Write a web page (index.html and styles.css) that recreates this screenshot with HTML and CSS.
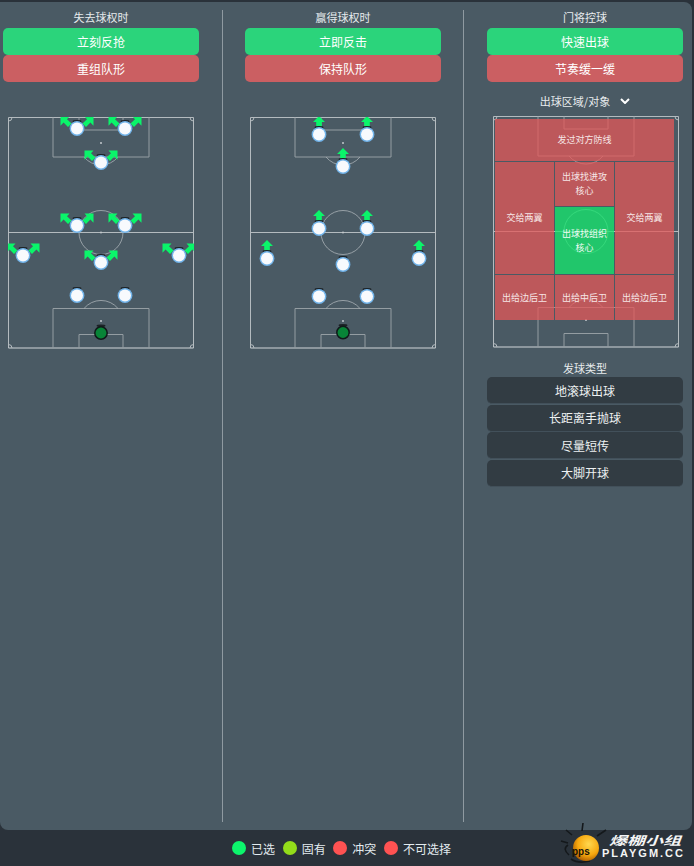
FILE: index.html
```html
<!DOCTYPE html>
<html lang="zh-CN">
<head>
    <meta charset="UTF-8">
    <meta name="viewport" content="width=device-width, initial-scale=1.0">
    <title>球队战术</title>
    <link rel="stylesheet" href="styles.css">
</head>
<body>
    <svg class="defs" aria-hidden="true">
        <defs>
            <g id="field">
                <path class="line-soft" d="M0.5 231V0.5H185.5V231"/>
                <path class="line" d="M0.5 231H185.5"/>
                <path class="line-soft" d="M0.5 115.5H185.5"/>
                <circle class="thin" cx="93" cy="115.5" r="22"/>
                <path class="line-soft" d="M0.5 4A3.5 3.5 0 0 0 4 0.5M182 0.5A3.5 3.5 0 0 0 185.5 4M0.5 227.5A3.5 3.5 0 0 1 4 231M182 231A3.5 3.5 0 0 1 185.5 227.5"/>
                <path class="box" d="M45 0.5V40H141V0.5M71 0.5V13H115V0.5"/>
                <path class="box" d="M45 231V191.5H141V231M71 231V217.5H115V231"/>
                <path class="thin" d="M76 40A22 22 0 0 0 110 40M76 191.5A22 22 0 0 1 110 191.5"/>
                <circle class="spot" cx="93" cy="26" r="1"/>
                <circle class="spot" cx="93" cy="115.5" r="1"/>
                <circle class="spot" cx="93" cy="204" r="1"/>
            </g>
            <g id="player">
                <ellipse class="nub" cx="0" cy="-7.2" rx="4.5" ry="1.4"/>
                <circle class="halo" r="7.4"/>
                <circle class="disc" r="6"/>
            </g>
            <g id="keeper">
                <ellipse class="nub" cx="0" cy="-7.2" rx="4.5" ry="1.4"/>
                <circle class="disc-gk" r="6.2"/>
            </g>
            <g id="press">
                <path class="arrow" d="M-16.5 -12H-7.5L-10 -9.2L-5.5 -5L-9 -1.5L-13.4 -5.9L-16.5 -2.8Z"/>
                <path class="arrow" d="M16.5 -12H7.5L10 -9.2L5.5 -5L9 -1.5L13.4 -5.9L16.5 -2.8Z"/>
            </g>
            <g id="up">
                <path class="arrow" d="M0 -18.5L6 -12.5H2.8V-6.5H-2.8V-12.5H-6Z"/>
            </g>
        </defs>
    </svg>

    <div class="panel">
        <section class="col">
            <div class="col-title">失去球权时</div>
            <button class="btn btn-green">立刻反抢</button>
            <button class="btn btn-red">重组队形</button>
            <div class="spacer"></div>
            <svg class="pitch" viewBox="0 0 186 232">
                <use href="#field"/>
                <use href="#press" x="69" y="11.5"/><use href="#player" x="69" y="11.5"/>
                <use href="#press" x="117" y="11.5"/><use href="#player" x="117" y="11.5"/>
                <use href="#press" x="93" y="45.5"/><use href="#player" x="93" y="45.5"/>
                <use href="#press" x="69" y="108.5"/><use href="#player" x="69" y="108.5"/>
                <use href="#press" x="117" y="108.5"/><use href="#player" x="117" y="108.5"/>
                <use href="#press" x="15" y="138.5"/><use href="#player" x="15" y="138.5"/>
                <use href="#press" x="171" y="138.5"/><use href="#player" x="171" y="138.5"/>
                <use href="#press" x="93" y="145.5"/><use href="#player" x="93" y="145.5"/>
                <use href="#player" x="69" y="178.5"/>
                <use href="#player" x="117" y="178.5"/>
                <use href="#keeper" x="93" y="216"/>
            </svg>
        </section>

        <div class="divider"></div>

        <section class="col">
            <div class="col-title">赢得球权时</div>
            <button class="btn btn-green">立即反击</button>
            <button class="btn btn-red">保持队形</button>
            <div class="spacer"></div>
            <svg class="pitch" viewBox="0 0 186 232">
                <use href="#field"/>
                <use href="#up" x="69" y="17.5"/><use href="#player" x="69" y="17.5"/>
                <use href="#up" x="117" y="17.5"/><use href="#player" x="117" y="17.5"/>
                <use href="#up" x="93" y="49.5"/><use href="#player" x="93" y="49.5"/>
                <use href="#up" x="69" y="111.5"/><use href="#player" x="69" y="111.5"/>
                <use href="#up" x="117" y="111.5"/><use href="#player" x="117" y="111.5"/>
                <use href="#up" x="17" y="141.5"/><use href="#player" x="17" y="141.5"/>
                <use href="#up" x="169" y="141.5"/><use href="#player" x="169" y="141.5"/>
                <use href="#player" x="93" y="147.5"/>
                <use href="#player" x="69" y="179.5"/>
                <use href="#player" x="117" y="179.5"/>
                <use href="#keeper" x="93" y="215.5"/>
            </svg>
        </section>

        <div class="divider divider-second"></div>

        <section class="col">
            <div class="col-title">门将控球</div>
            <button class="btn btn-green">快速出球</button>
            <button class="btn btn-red">节奏缓一缓</button>
            <div class="dropdown">
                <span>出球区域/对象</span>
                <svg class="chevron" viewBox="0 0 10 6"><path d="M1 1L5 5L9 1"/></svg>
            </div>
            <div class="zone-pitch">
                <svg class="pitch" viewBox="0 0 186 232"><use href="#field"/></svg>
                <div class="zones">
                    <div class="zone zone-top">发过对方防线</div>
                    <div class="zone zone-wing">交给两翼</div>
                    <div class="zone">出球找进攻核心</div>
                    <div class="zone zone-wing">交给两翼</div>
                    <div class="zone zone-on">出球找组织核心</div>
                    <div class="zone">出给边后卫</div>
                    <div class="zone">出给中后卫</div>
                    <div class="zone">出给边后卫</div>
                </div>
            </div>
            <div class="col-title sub-title">发球类型</div>
            <div class="btn-stack">
                <button class="btn btn-dark">地滚球出球</button>
                <button class="btn btn-dark">长距离手抛球</button>
                <button class="btn btn-dark">尽量短传</button>
                <button class="btn btn-dark">大脚开球</button>
            </div>
        </section>
    </div>

    <footer class="footer">
        <div class="legend-item"><span class="dot dot-selected"></span>已选</div>
        <div class="legend-item"><span class="dot dot-fixed"></span>固有</div>
        <div class="legend-item"><span class="dot dot-red"></span>冲突</div>
        <div class="legend-item"><span class="dot dot-red"></span>不可选择</div>
    </footer>

    <div class="logo">
        <svg class="logo-ball" viewBox="0 0 50 44">
            <defs>
                <radialGradient id="ballFill" cx="0.6" cy="0.35" r="0.7">
                    <stop offset="0" stop-color="#ffd84f"/>
                    <stop offset="0.6" stop-color="#f7a80f"/>
                    <stop offset="1" stop-color="#a85a00"/>
                </radialGradient>
            </defs>
            <path class="ray" d="M22 9L23 1M12 13L6 8M8 21L1 19M37 14L46 8M9 33Q2 27 8 23M11 37Q18 42 30 39"/>
            <circle cx="26" cy="26" r="13" fill="url(#ballFill)"/>
            <text class="ball-text" x="12" y="33">pps</text>
        </svg>
        <div class="logo-text">
            <div class="logo-cn">爆棚小组</div>
            <div class="logo-en">PLAYGM.CC</div>
        </div>
    </div>
</body>
</html>
```

FILE: styles.css
```css
* {
    box-sizing: border-box;
}
html, body {
    margin: 0;
    height: 100%;
}
body {
    position: relative;
    width: 694px;
    height: 866px;
    overflow: hidden;
    display: flex;
    flex-direction: column;
    background-color: #2a323a;
    color: #e8ecee;
    font-family: "Noto Sans CJK SC", "Noto Sans", sans-serif;
}
.defs {
    position: absolute;
    width: 0;
    height: 0;
}

/* main panel */
.panel {
    display: flex;
    width: 692px;
    height: 828px;
    margin-top: 2px;
    padding-left: 3px;
    background-color: #4a5a64;
    border-radius: 0 8px 8px 8px;
}
.col {
    width: 196px;
    padding-top: 7px;
}
.divider {
    width: 1px;
    margin: 8px 22px 8px 23px;
    background-color: #8f9aa1;
}
.divider-second {
    margin: 8px 23px 8px 22px;
}
.col-title {
    height: 19px;
    font-size: 11px;
    line-height: 17px;
    text-align: center;
}
.btn {
    display: block;
    width: 100%;
    height: 27px;
    padding: 0;
    border: 0;
    border-radius: 5px;
    color: #fff;
    font-family: inherit;
    font-size: 12px;
    line-height: 25px;
    text-align: center;
}
.btn-green {
    background-color: #2bd47b;
}
.btn-red {
    background-color: #cb5f62;
}
.btn-dark {
    background-color: #323c43;
    color: #eef1f2;
    border-bottom: 1px solid #42505a;
}
.btn-stack {
    display: flex;
    flex-direction: column;
    gap: 0.5px;
}
.spacer {
    height: 35px;
}

/* pitch */
.pitch {
    display: block;
    width: 186px;
    height: 232px;
    margin-left: 5px;
}
.line {
    fill: none;
    stroke: #d0d5d8;
    stroke-width: 1;
}
.line-soft {
    fill: none;
    stroke: #b4bbbf;
    stroke-width: 1;
}
.box {
    fill: none;
    stroke: #949da2;
    stroke-width: 1;
}
.thin {
    fill: none;
    stroke: #a9b1b6;
    stroke-width: 0.8;
}
.spot {
    fill: #c3c9cc;
}
.nub {
    fill: #1c2226;
}
.halo {
    fill: #72b4ea;
}
.disc {
    fill: #f8fafd;
}
.disc-gk {
    fill: #088437;
    stroke: #10191a;
    stroke-width: 1.5;
}
.arrow {
    fill: #0af56a;
}

/* goalkeeper zones */
.dropdown {
    display: flex;
    align-items: center;
    justify-content: center;
    gap: 10px;
    height: 34px;
    padding-top: 4px;
    font-size: 11px;
}
.chevron {
    width: 10px;
    height: 6px;
    fill: none;
    stroke: #fff;
    stroke-width: 2;
}
.zone-pitch {
    position: relative;
    height: 242px;
}
.zone-pitch .pitch {
    margin-left: 5.5px;
}
.zones {
    position: absolute;
    left: 8px;
    top: 3px;
    display: grid;
    grid-template-columns: 59px 59px 59px;
    grid-template-rows: 42px 44px 67px 45px;
    gap: 1px;
}
.zone {
    display: flex;
    align-items: center;
    justify-content: center;
    padding: 0 5px;
    background-color: rgba(228, 88, 88, 0.75);
    color: #f6e6e6;
    font-size: 9px;
    line-height: 14px;
    text-align: center;
}
.zone-top {
    grid-column: 1 / 4;
}
.zone-wing {
    grid-row: span 2;
}
.zone-on {
    background-color: rgba(20, 235, 110, 0.75);
    color: #effbf4;
}
.sub-title {
    line-height: 20px;
}

/* legend */
.footer {
    display: flex;
    align-items: center;
    justify-content: center;
    gap: 7.7px;
    height: 36px;
    padding-right: 11px;
    font-size: 12px;
    color: #e3ebef;
}
.legend-item {
    display: flex;
    align-items: center;
    gap: 5px;
}
.dot {
    width: 14px;
    height: 14px;
    border-radius: 50%;
}
.dot-selected {
    background-color: #0cf56c;
}
.dot-fixed {
    background-color: #93dc1a;
}
.dot-red {
    background-color: #ff5252;
}

/* watermark */
.logo {
    position: absolute;
    left: 560px;
    top: 822px;
    display: flex;
    align-items: flex-start;
}
.logo-ball {
    width: 50px;
    height: 44px;
}
.ray {
    fill: none;
    stroke: #14181b;
    stroke-width: 1.6;
}
.ball-text {
    fill: #1a1305;
    font-family: "Liberation Sans", sans-serif;
    font-size: 10px;
    font-weight: 700;
}
.logo-text {
    margin: 9px 0 0 -8px;
    color: #f4f5f5;
    font-weight: 700;
}
.logo-cn {
    height: 17px;
    padding-left: 7px;
    font-size: 12px;
    font-style: italic;
    line-height: 17px;
    white-space: nowrap;
    transform: scaleX(1.5);
    transform-origin: 7px 0;
}
.logo-en {
    font-family: "Liberation Sans", sans-serif;
    font-size: 11px;
    line-height: 11px;
    letter-spacing: 2px;
    white-space: nowrap;
}
```
